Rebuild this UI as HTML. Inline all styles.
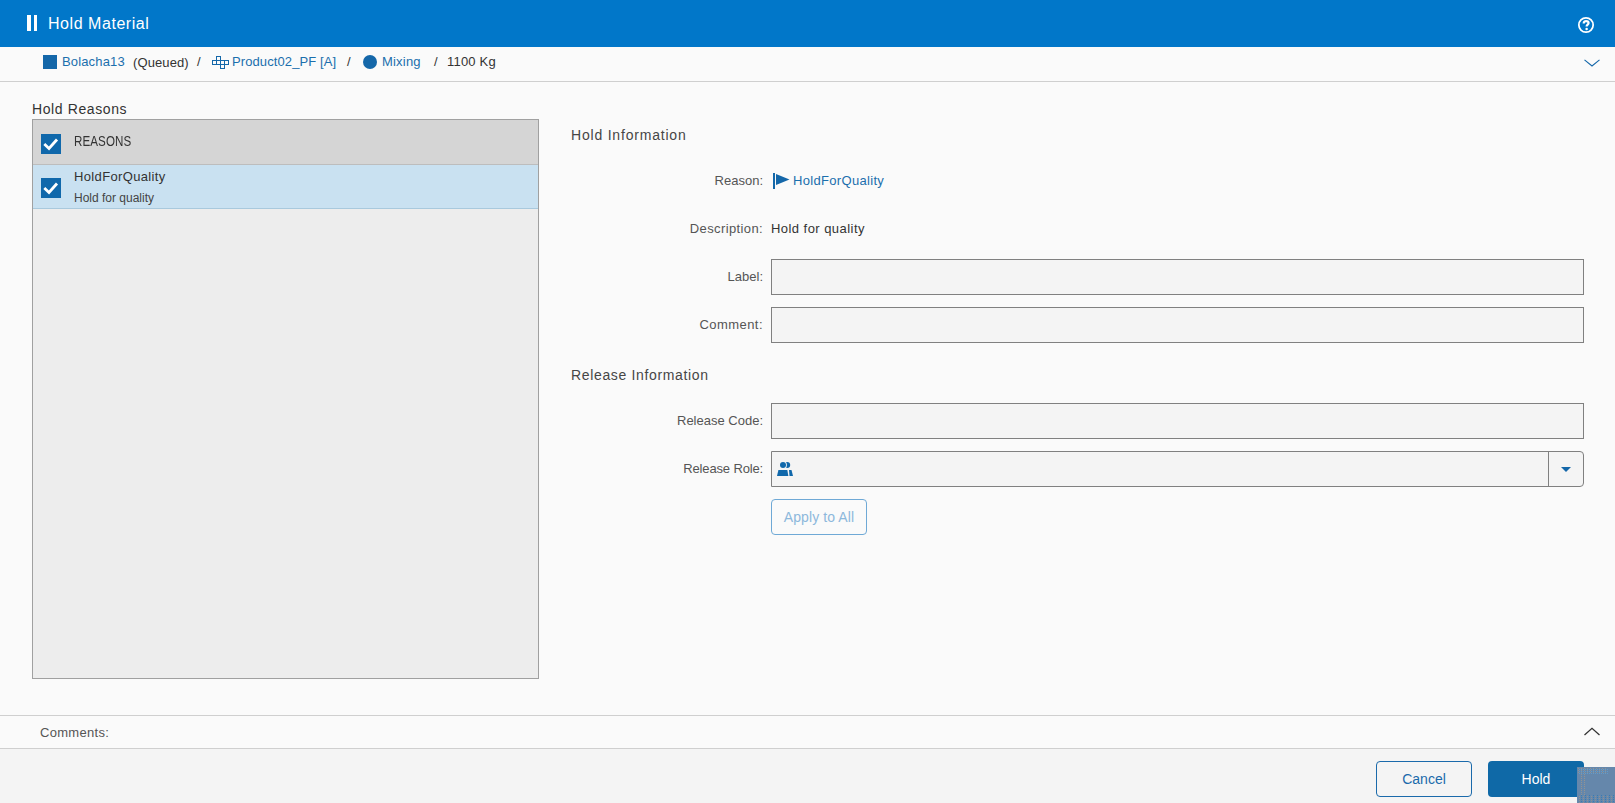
<!DOCTYPE html>
<html><head><meta charset="utf-8">
<style>
*{box-sizing:border-box;margin:0;padding:0}
html,body{width:1615px;height:803px;overflow:hidden;background:#fafafa;font-family:"Liberation Sans",sans-serif;color:#333}
.abs{position:absolute}
#hdr{left:0;top:0;width:1615px;height:47px;background:#0177c9}
#hdr .title{left:48px;top:15px;font-size:16px;letter-spacing:0.55px;color:#fff;white-space:nowrap}
#crumb{left:0;top:47px;width:1615px;height:35px;background:#fafafa;border-bottom:1px solid #cfcfcf}
.t{position:absolute;white-space:nowrap;font-size:13px;line-height:16px}
.blue{color:#1b6fad}
.lbl{color:#555;text-align:right;width:200px}
.inp{position:absolute;left:771px;width:813px;height:36px;background:#f4f4f4;border:1px solid #808080}
#panel{left:32px;top:119px;width:507px;height:560px;background:#ededed;border:1px solid #a0a0a0}
.row1{position:absolute;left:0;top:0;width:505px;height:45px;background:#d5d5d5;border-bottom:1px solid #bdbdbd}
.row2{position:absolute;left:0;top:45px;width:505px;height:44px;background:#c9e1f1;border-bottom:1px solid #a9c9dd}
.cb{position:absolute;width:20px;height:20px;background:#1068ab}
#cmt{left:0;top:715px;width:1615px;height:34px;border-top:1px solid #cfcfcf;border-bottom:1px solid #cfcfcf;background:#fafafa}
#foot{left:0;top:749px;width:1615px;height:54px;background:#f4f4f4}
.btn{position:absolute;height:36px;border-radius:4px;font-size:14px;text-align:center;line-height:34px}
</style></head><body>
<div id="hdr" class="abs">
  <div class="abs" style="left:27px;top:15px;width:4px;height:16px;background:#fff"></div>
  <div class="abs" style="left:33.5px;top:15px;width:3.8px;height:16px;background:#fff"></div>
  <div class="abs title">Hold Material</div>
  <svg class="abs" style="left:1577px;top:16px" width="18" height="18" viewBox="0 0 18 18"><circle cx="9" cy="9" r="7.15" fill="none" stroke="#fff" stroke-width="1.75"/><path d="M6.7 7.4 C6.7 5.7 7.8 5.1 9.1 5.1 C10.6 5.1 11.6 5.8 11.6 7 C11.6 8.5 9.6 8.8 9.6 10.4" fill="none" stroke="#fff" stroke-width="2.2"/><circle cx="9.6" cy="12.9" r="1.25" fill="#fff"/></svg>
</div>
<div id="crumb" class="abs">
  <div class="abs" style="left:43px;top:8px;width:14px;height:14px;background:#1467a9"></div>
  <div class="t blue" style="left:62px;top:7px;letter-spacing:0.15px">Bolacha13</div>
  <div class="t" style="left:133px;top:8px;letter-spacing:0.1px">(Queued)</div>
  <div class="t" style="left:197px;top:7px">/</div>
  <svg class="abs" style="left:212px;top:9px" width="17" height="13" viewBox="0 0 17 13"><g fill="none" stroke="#1467a9" stroke-width="1"><rect x="4.5" y="0.5" width="4" height="4"/><rect x="0.5" y="4.5" width="16" height="4"/><line x1="4.5" y1="4.5" x2="4.5" y2="8.5"/><line x1="8.5" y1="4.5" x2="8.5" y2="8.5"/><line x1="12.5" y1="4.5" x2="12.5" y2="8.5"/><rect x="8.5" y="8.5" width="4" height="4"/></g></svg>
  <div class="t blue" style="left:232px;top:7px;letter-spacing:0.1px">Product02_PF [A]</div>
  <div class="t" style="left:347px;top:7px">/</div>
  <div class="abs" style="left:363px;top:8px;width:14px;height:14px;border-radius:50%;background:#1467a9"></div>
  <div class="t blue" style="left:382px;top:7px;letter-spacing:0.2px">Mixing</div>
  <div class="t" style="left:434px;top:7px">/</div>
  <div class="t" style="left:447px;top:7px;letter-spacing:0.2px">1100 Kg</div>
  <svg class="abs" style="left:1584px;top:12px" width="16" height="9" viewBox="0 0 16 9"><path d="M0.5 0.9 L8 6.9 L15.5 0.9" fill="none" stroke="#1467a9" stroke-width="1.15"/></svg>
</div>

<div class="t" style="left:32px;top:101px;font-size:14px;color:#333;letter-spacing:0.6px">Hold Reasons</div>
<div id="panel" class="abs">
  <div class="row1">
    <div class="cb" style="left:8px;top:14px"><svg width="20" height="20" viewBox="0 0 20 20"><path d="M3.3 10 L8 14.5 L16 5.5" fill="none" stroke="#fff" stroke-width="2.8" stroke-linejoin="miter" stroke-linecap="butt"/></svg></div>
    <div class="t" style="left:41px;top:13px;color:#333;font-size:14.5px;transform:scaleX(0.8);transform-origin:0 0;letter-spacing:0.1px">REASONS</div>
  </div>
  <div class="row2">
    <div class="cb" style="left:8px;top:13px"><svg width="20" height="20" viewBox="0 0 20 20"><path d="M3.3 10 L8 14.5 L16 5.5" fill="none" stroke="#fff" stroke-width="2.8" stroke-linejoin="miter" stroke-linecap="butt"/></svg></div>
    <div class="t" style="left:41px;top:4px;color:#333;letter-spacing:0.35px">HoldForQuality</div>
    <div class="t" style="left:41px;top:25px;font-size:12px;color:#444">Hold for quality</div>
  </div>
</div>

<div class="t" style="left:571px;top:127px;font-size:14px;color:#464646;letter-spacing:0.8px">Hold Information</div>
<div class="t lbl" style="left:563px;top:173px">Reason:</div>
<svg class="abs" style="left:773px;top:173px" width="18" height="16" viewBox="0 0 18 16"><rect x="0" y="0" width="2" height="16" fill="#1467a9"/><path d="M3 1 L16.5 6.5 L3 12 Z" fill="#1467a9"/></svg>
<div class="t blue" style="left:793px;top:173px;letter-spacing:0.32px">HoldForQuality</div>
<div class="t lbl" style="left:563px;top:221px;letter-spacing:0.38px">Description:</div>
<div class="t" style="left:771px;top:221px;letter-spacing:0.45px">Hold for quality</div>
<div class="t lbl" style="left:563px;top:269px">Label:</div>
<div class="inp" style="top:259px"></div>
<div class="t lbl" style="left:563px;top:317px;letter-spacing:0.45px">Comment:</div>
<div class="inp" style="top:307px"></div>
<div class="t" style="left:571px;top:367px;font-size:14px;color:#464646;letter-spacing:0.65px">Release Information</div>
<div class="t lbl" style="left:563px;top:413px">Release Code:</div>
<div class="inp" style="top:403px"></div>
<div class="t lbl" style="left:563px;top:461px;letter-spacing:-0.15px">Release Role:</div>
<div class="inp" style="top:451px;border-radius:0 4px 4px 0">
  <div class="abs" style="left:776px;top:0;width:1px;height:34px;background:#808080"></div>
  <svg class="abs" style="left:789px;top:15px" width="10" height="5" viewBox="0 0 10 5"><path d="M0 0 L10 0 L5 5 Z" fill="#1467a9"/></svg>
</div>
<svg class="abs" style="left:777px;top:461px" width="17" height="16" viewBox="0 0 17 16"><defs><mask id="m1"><rect width="17" height="16" fill="#fff"/><circle cx="6" cy="4" r="3.9" fill="#000"/></mask></defs><g fill="#1068ab"><circle cx="6" cy="4" r="3"/><circle cx="10.2" cy="4" r="3" mask="url(#m1)"/><path d="M1.4 9 L10.3 9 L11.4 15 L0 15 Z"/><path d="M12 9 L14.5 9 L16 15 L12.5 15 Z"/></g></svg>
<div class="btn" style="left:771px;top:499px;width:96px;border:1px solid #6fa9d6;color:#8db8dc;font-size:14px;letter-spacing:0.1px;line-height:35px">Apply to All</div>

<div id="cmt" class="abs">
  <div class="t" style="left:40px;top:9px;color:#555;letter-spacing:0.3px">Comments:</div>
  <svg class="abs" style="left:1584px;top:11px" width="16" height="9" viewBox="0 0 16 9"><path d="M0.5 8 L8 1.3 L15.5 8" fill="none" stroke="#333" stroke-width="1.3"/></svg>
</div>
<div id="foot" class="abs">
  <div class="btn" style="left:1376px;top:12px;width:96px;border:1px solid #1a6aab;color:#1a6aab;background:transparent">Cancel</div>
  <div class="btn" style="left:1488px;top:12px;width:96px;background:#0f69a7;color:#fff;line-height:36px">Hold</div>
  <svg class="abs" style="left:1577px;top:18px" width="38" height="36" viewBox="0 0 38 36"><defs><pattern id="pb" width="2" height="2" patternUnits="userSpaceOnUse"><rect x="0" y="0" width="1" height="1" fill="#62a8dc"/></pattern><pattern id="pt" width="3" height="2" patternUnits="userSpaceOnUse"><rect x="1" y="1" width="1" height="1" fill="#a89886"/></pattern><pattern id="pm" width="4" height="2" patternUnits="userSpaceOnUse"><rect x="0" y="0" width="1" height="1" fill="#1a73b8"/><rect x="2" y="1" width="1" height="1" fill="#a89886"/></pattern></defs><rect width="38" height="36" fill="#6587ab"/><rect x="1" y="1" width="30" height="6" fill="url(#pb)" opacity="0.6"/><rect x="1" y="1" width="30" height="6" fill="url(#pt)" opacity="0.6"/><rect x="2" y="7" width="8" height="21" fill="url(#pt)" opacity="0.7"/><rect x="1" y="28" width="37" height="8" fill="url(#pm)" opacity="0.6"/></svg>
</div>
</body></html>
